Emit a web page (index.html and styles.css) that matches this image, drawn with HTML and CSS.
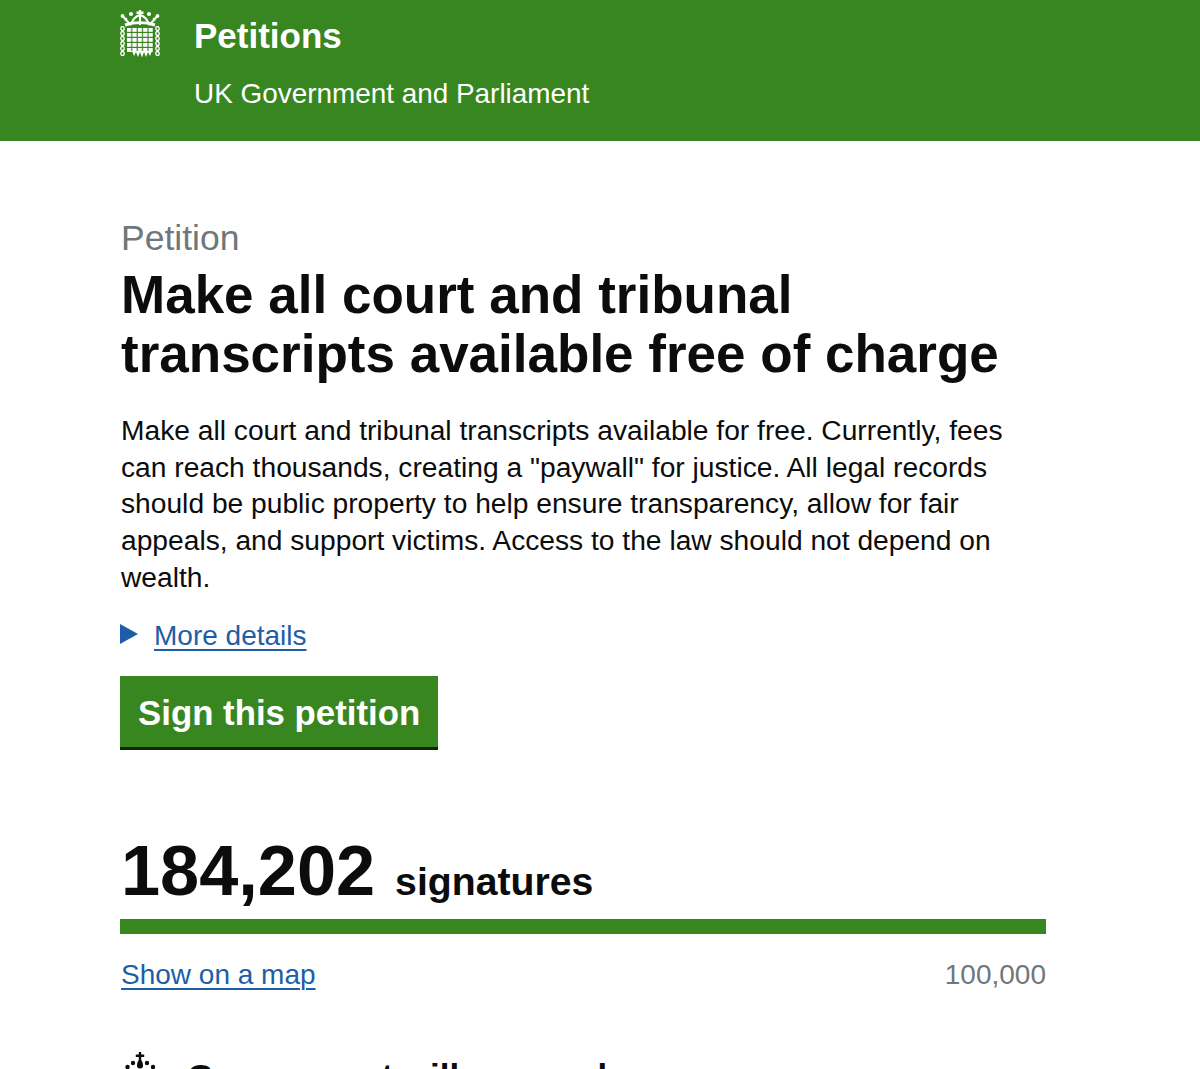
FILE: index.html
```html
<!DOCTYPE html>
<html lang="en">
<head>
  <meta charset="UTF-8">
  <title>Petitions</title>
  <link rel="stylesheet" href="styles.css">
</head>
<body>
<header class="site-header">
  <svg class="logo" viewBox="0 0 40 47" width="40" height="47" aria-hidden="true">
    <defs>
      <pattern id="grille" x="7" y="18" width="5.400" height="5" patternUnits="userSpaceOnUse">
        <rect width="4.200" height="3.800" fill="#fff"/>
      </pattern>
      <pattern id="chain" x="0" y="16" width="5" height="5" patternUnits="userSpaceOnUse">
        <ellipse cx="2.500" cy="2.500" rx="1.700" ry="2" fill="none" stroke="#fff" stroke-width="1.300"/>
      </pattern>
    </defs>
    <!-- crown -->
    <g fill="none" stroke="#fff" stroke-width="2">
      <path d="M3 6c2 4 5 6 8 9M37 6c-2 4-5 6-8 9"/>
      <path d="M20 5c-4 1-7 3-9 10M20 5c4 1 7 3 9 10"/>
      <path d="M20 5v10"/>
      <path d="M5 15c9-3 21-3 30 0" stroke-width="3"/>
    </g>
    <g fill="#fff">
      <path d="M18.800 0h2.400v1.500h2.300v2.400h-2.300V6h-2.400V3.900h-2.300V1.500h2.300z"/>
      <circle cx="11" cy="4" r="2.100"/><circle cx="29" cy="4" r="2.100"/>
      <circle cx="2.500" cy="6" r="1.900"/><circle cx="37.500" cy="6" r="1.900"/>
      <circle cx="6" cy="9" r="1.300"/><circle cx="34" cy="9" r="1.300"/>
    </g>
    <!-- portcullis -->
    <rect x="7" y="18" width="26" height="24" fill="url(#grille)"/>
    <path fill="#fff" d="M7 41h26l-1.500 1-1.500 4-2-4-2 5-2-5-2 5.500-2-5.500-2 5-2-5-2 4-1.500-4z"/>
    <rect x="0" y="16" width="5" height="30" fill="url(#chain)"/>
    <rect x="35" y="16" width="5" height="30" fill="url(#chain)"/>
  </svg>
  <div class="site-titles">
    <div class="site-name">Petitions</div>
    <div class="site-sub">UK Government and Parliament</div>
  </div>
</header>

<main class="content">
  <p class="kicker">Petition</p>
  <h1>Make all court and tribunal transcripts available free of charge</h1>
  <p class="lead">Make all court and tribunal transcripts available for free. Currently, fees can reach thousands, creating a "paywall" for justice. All legal records should be public property to help ensure transparency, allow for fair appeals, and support victims. Access to the law should not depend on wealth.</p>

  <div class="details">
    <span class="arrow"></span>
    <a href="#">More details</a>
  </div>

  <a class="button" href="#">Sign this petition</a>

  <div class="count">
    <span class="count-num">184,202</span>
    <span class="count-label">signatures</span>
  </div>
  <div class="bar"></div>
  <div class="bar-foot">
    <a href="#">Show on a map</a>
    <span class="target">100,000</span>
  </div>

  <div class="response">
    <svg class="crown" viewBox="0 0 40 40" width="40" height="40" aria-hidden="true">
      <g fill="#0b0c0c">
        <path d="M18.800 0h2.400v2.500h3v2.400h-3V8c1.500 2 1.800 4 1.800 6 0 1.500-1 2.500-3 2.500S17 15.500 17 14c0-2 .3-4 1.800-6V4.900h-3V2.500h3z"/>
        <circle cx="13" cy="11" r="2.200"/><circle cx="27" cy="11" r="2.200"/>
        <circle cx="7.500" cy="15" r="2.200"/><circle cx="33" cy="15" r="2.200"/>
      </g>
    </svg>
    <h2>Government will respond</h2>
  </div>
</main>
</body>
</html>
```

FILE: styles.css
```css
html, body {
  height: 1069px;
  overflow: hidden;
}
body {
  margin: 0;
  font-family: "Liberation Sans", Arial, sans-serif;
  color: #0b0c0c;
  background: white;
}
a {
  color: #1d5ea8;
  text-underline-offset: 4px;
  text-decoration-thickness: 1.500px;
}
.site-header {
  background: #38861f;
  color: white;
  height: 141px;
  padding: 10px 0 0 120px;
  box-sizing: border-box;
  display: flex;
  gap: 34px;
}
.logo {
  flex: none;
}
.site-titles {
  padding-top: 4px;
}
.site-name {
  font-size: 35px;
  font-weight: bold;
  line-height: 44px;
}
.site-sub {
  font-size: 27.900px;
  line-height: 32px;
  margin-top: 20px;
}
.content {
  width: 926px;
  margin-left: 120px;
}
.kicker {
  margin: 78px 0 0;
  padding-left: 1px;
  font-size: 35.500px;
  line-height: 38px;
  color: #6f777b;
}
h1 {
  margin: 8px 0 0;
  padding-left: 1px;
  font-size: 53px;
  line-height: 59px;
  width: 890px;
}
.lead {
  margin: 29px 0 0;
  padding-left: 1px;
  font-size: 28.200px;
  line-height: 36.700px;
  width: 890px;
}
.details {
  display: flex;
  align-items: center;
  gap: 16px;
  margin-top: 22px;
  font-size: 28px;
  line-height: 36px;
}
.arrow {
  width: 0;
  height: 0;
  margin-bottom: 4px;
  border-left: 18px solid #1d5ea8;
  border-top: 10px solid transparent;
  border-bottom: 10px solid transparent;
}
.button {
  display: block;
  width: fit-content;
  margin-top: 22px;
  padding: 2px 18px 0;
  background: #38861f;
  border-bottom: 3px solid #0b2a05;
  color: white;
  font-size: 34.800px;
  font-weight: bold;
  line-height: 69px;
  text-decoration: none;
}
.count {
  display: flex;
  align-items: baseline;
  gap: 20px;
  margin-top: 79px;
  padding-left: 1px;
}
.count-num {
  font-size: 70.300px;
  font-weight: bold;
  line-height: 84px;
}
.count-label {
  font-size: 39.200px;
  font-weight: bold;
}
.bar {
  height: 15px;
  margin-top: 6px;
  background: #38861f;
}
.bar-foot {
  display: flex;
  justify-content: space-between;
  margin-top: 23px;
  padding-left: 1px;
  font-size: 28px;
  line-height: 36px;
}
.target {
  color: #6f777b;
}
.response {
  display: flex;
  gap: 27px;
  margin-top: 59px;
}
.crown {
  flex: none;
}
h2 {
  margin: 2px 0 0;
  font-size: 35px;
  line-height: 46px;
}
```
